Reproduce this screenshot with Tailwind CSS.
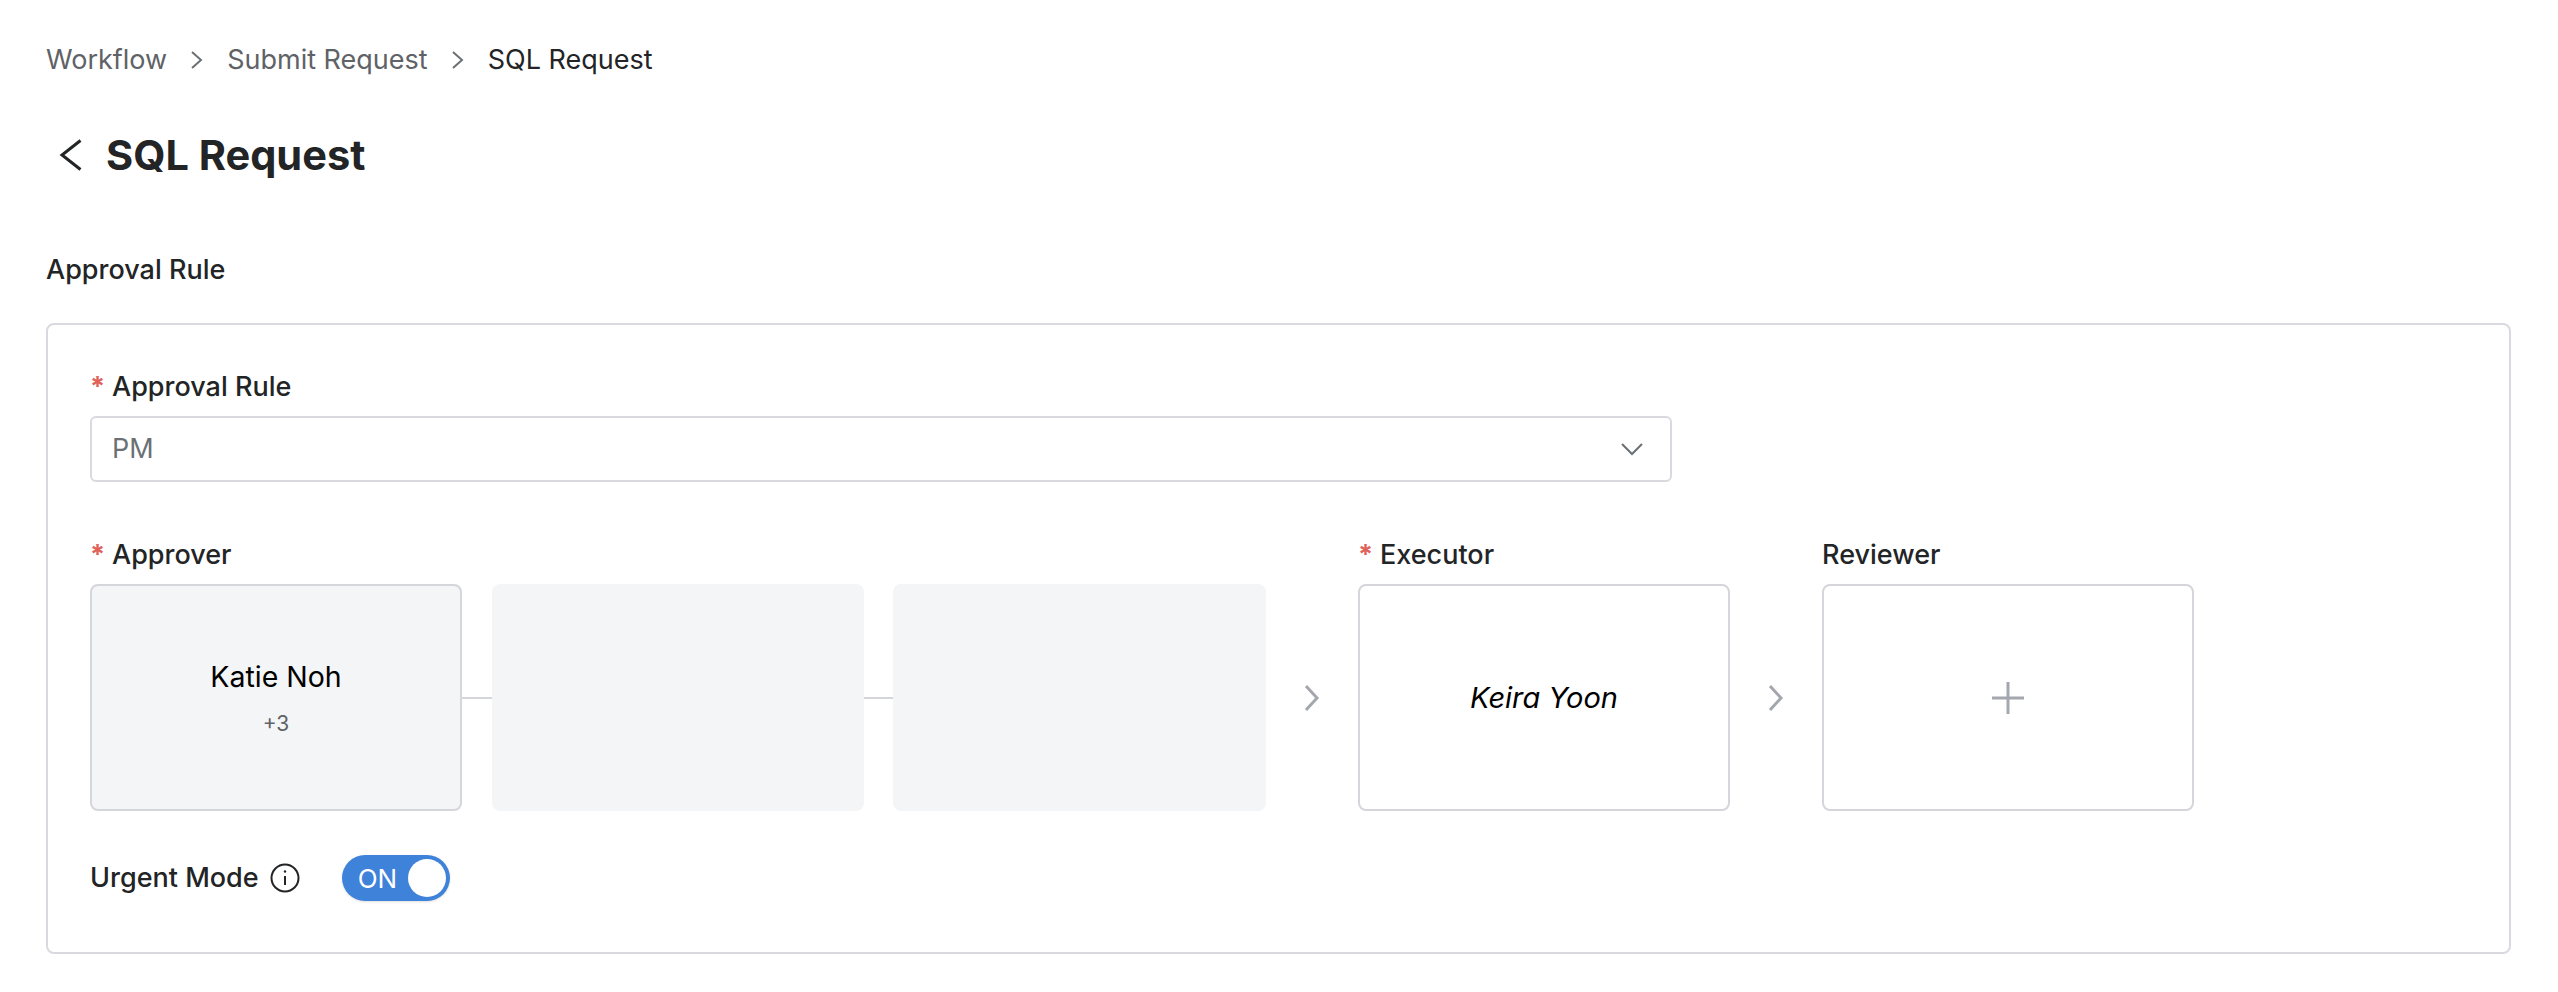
<!DOCTYPE html>
<html lang="en">
<head>
    <meta charset="UTF-8">
    <meta name="viewport" content="width=device-width, initial-scale=1.0">
    <title>SQL Request</title>
    <script src="https://cdn.jsdelivr.net/npm/@tailwindcss/browser@4"></script>
</head>
<body class="bg-white min-h-screen font-['Inter',sans-serif] text-[27px] text-[#222426]">
    <div class="pl-[46px] pr-[47px] pt-[40px]">
        <!-- breadcrumb -->
        <nav class="flex items-center h-[40px] text-[#5f6266]">
            <span>Workflow</span>
            <svg class="w-[16px] h-[20px] ml-[22px] mr-[22px]" viewBox="0 0 16 20" fill="none" stroke="#6b7075" stroke-width="2"><path d="M3 2l9 8-9 8"/></svg>
            <span>Submit Request</span>
            <svg class="w-[16px] h-[20px] ml-[22px] mr-[22px]" viewBox="0 0 16 20" fill="none" stroke="#6b7075" stroke-width="2"><path d="M3 2l9 8-9 8"/></svg>
            <span class="text-[#222426]">SQL Request</span>
        </nav>

        <!-- title -->
        <div class="flex items-center h-[60px] mt-[45px]">
            <svg class="w-[24px] h-[32px] ml-[13px] mr-[23px]" viewBox="0 0 24 32" fill="none" stroke="#222426" stroke-width="3"><path d="M21.5 1.500L3 16l18.500 14.500"/></svg>
            <h1 class="text-[41.5px] font-bold">SQL Request</h1>
        </div>

        <h2 class="flex items-center h-[40px] mt-[65px] font-medium">Approval Rule</h2>

        <!-- approval rule card -->
        <div class="mt-[33px] border-2 border-[#d9dae0] rounded-[8px] pl-[42px] pt-[42px] pb-[51px]">
            <div class="flex items-center h-[40px] font-medium">
                <span class="text-[#e0605a] w-[22px] font-bold">*</span>Approval Rule
            </div>
            <div class="flex items-center justify-between mt-[9px] w-[1582px] h-[66px] border-2 border-[#d9dae0] rounded-[6px] pl-[20px] pr-[27px] text-[#6b7075]">
                <span>PM</span>
                <svg class="w-[22px] h-[14px]" viewBox="0 0 22 14" fill="none" stroke="#6b7075" stroke-width="2"><path d="M1 2l10 10L21 2"/></svg>
            </div>

            <div class="flex mt-[53px]">
                <div>
                    <div class="flex items-center h-[40px] font-medium">
                        <span class="text-[#e0605a] w-[22px] font-bold">*</span>Approver
                    </div>
                    <div class="flex items-center mt-[9px]">
                        <div class="flex flex-col items-center justify-center w-[372px] h-[227px] bg-[#f4f5f7] border-2 border-[#d5d6dc] rounded-[8px]">
                            <span class="text-black text-[28.5px]">Katie Noh</span>
                            <span class="text-[21px] text-[#5f6266] mt-[9px]">+3</span>
                        </div>
                        <div class="w-[30px] h-[2px] bg-[#d5d6dc]"></div>
                        <div class="w-[372px] h-[227px] bg-[#f4f5f7] rounded-[8px]"></div>
                        <div class="w-[29px] h-[2px] bg-[#d5d6dc]"></div>
                        <div class="w-[373px] h-[227px] bg-[#f4f5f7] rounded-[8px]"></div>
                    </div>
                </div>
                <div class="flex items-center w-[92px] justify-center pt-[49px]">
                    <svg class="w-[16px] h-[26px]" viewBox="0 0 16 26" fill="none" stroke="#a4a8ae" stroke-width="3"><path d="M2 1l11 12L2 25"/></svg>
                </div>
                <div>
                    <div class="flex items-center h-[40px] font-medium">
                        <span class="text-[#e0605a] w-[22px] font-bold">*</span>Executor
                    </div>
                    <div class="flex items-center justify-center mt-[9px] w-[372px] h-[227px] border-2 border-[#d5d6dc] rounded-[8px] italic text-black text-[29px]">Keira Yoon</div>
                </div>
                <div class="flex items-center w-[92px] justify-center pt-[49px]">
                    <svg class="w-[16px] h-[26px]" viewBox="0 0 16 26" fill="none" stroke="#a4a8ae" stroke-width="3"><path d="M2 1l11 12L2 25"/></svg>
                </div>
                <div>
                    <div class="flex items-center h-[40px] font-medium">Reviewer</div>
                    <div class="flex items-center justify-center mt-[9px] w-[372px] h-[227px] border-2 border-[#d5d6dc] rounded-[8px]">
                        <svg class="w-[32px] h-[32px]" viewBox="0 0 32 32" fill="none" stroke="#a4a8ae" stroke-width="3"><path d="M16 0v32M0 16h32"/></svg>
                    </div>
                </div>
            </div>

            <div class="flex items-center h-[46px] mt-[44px]">
                <span class="font-medium">Urgent Mode</span>
                <svg class="w-[30px] h-[30px] ml-[11px]" viewBox="0 0 30 30" fill="none" stroke="#222426" stroke-width="2"><circle cx="15" cy="15" r="13.500"/><path d="M15 13v9"/><circle cx="15" cy="8.500" r="1.200" fill="#222426" stroke="none"/></svg>
                <div class="flex items-center justify-between ml-[42px] w-[108px] h-[46px] rounded-full bg-[#3f82d9] pl-[16px] pr-[4px] text-white text-[26px] shadow-sm">
                    <span>ON</span>
                    <span class="w-[38px] h-[38px] rounded-full bg-white"></span>
                </div>
            </div>
        </div>
    </div>
</body>
</html>
